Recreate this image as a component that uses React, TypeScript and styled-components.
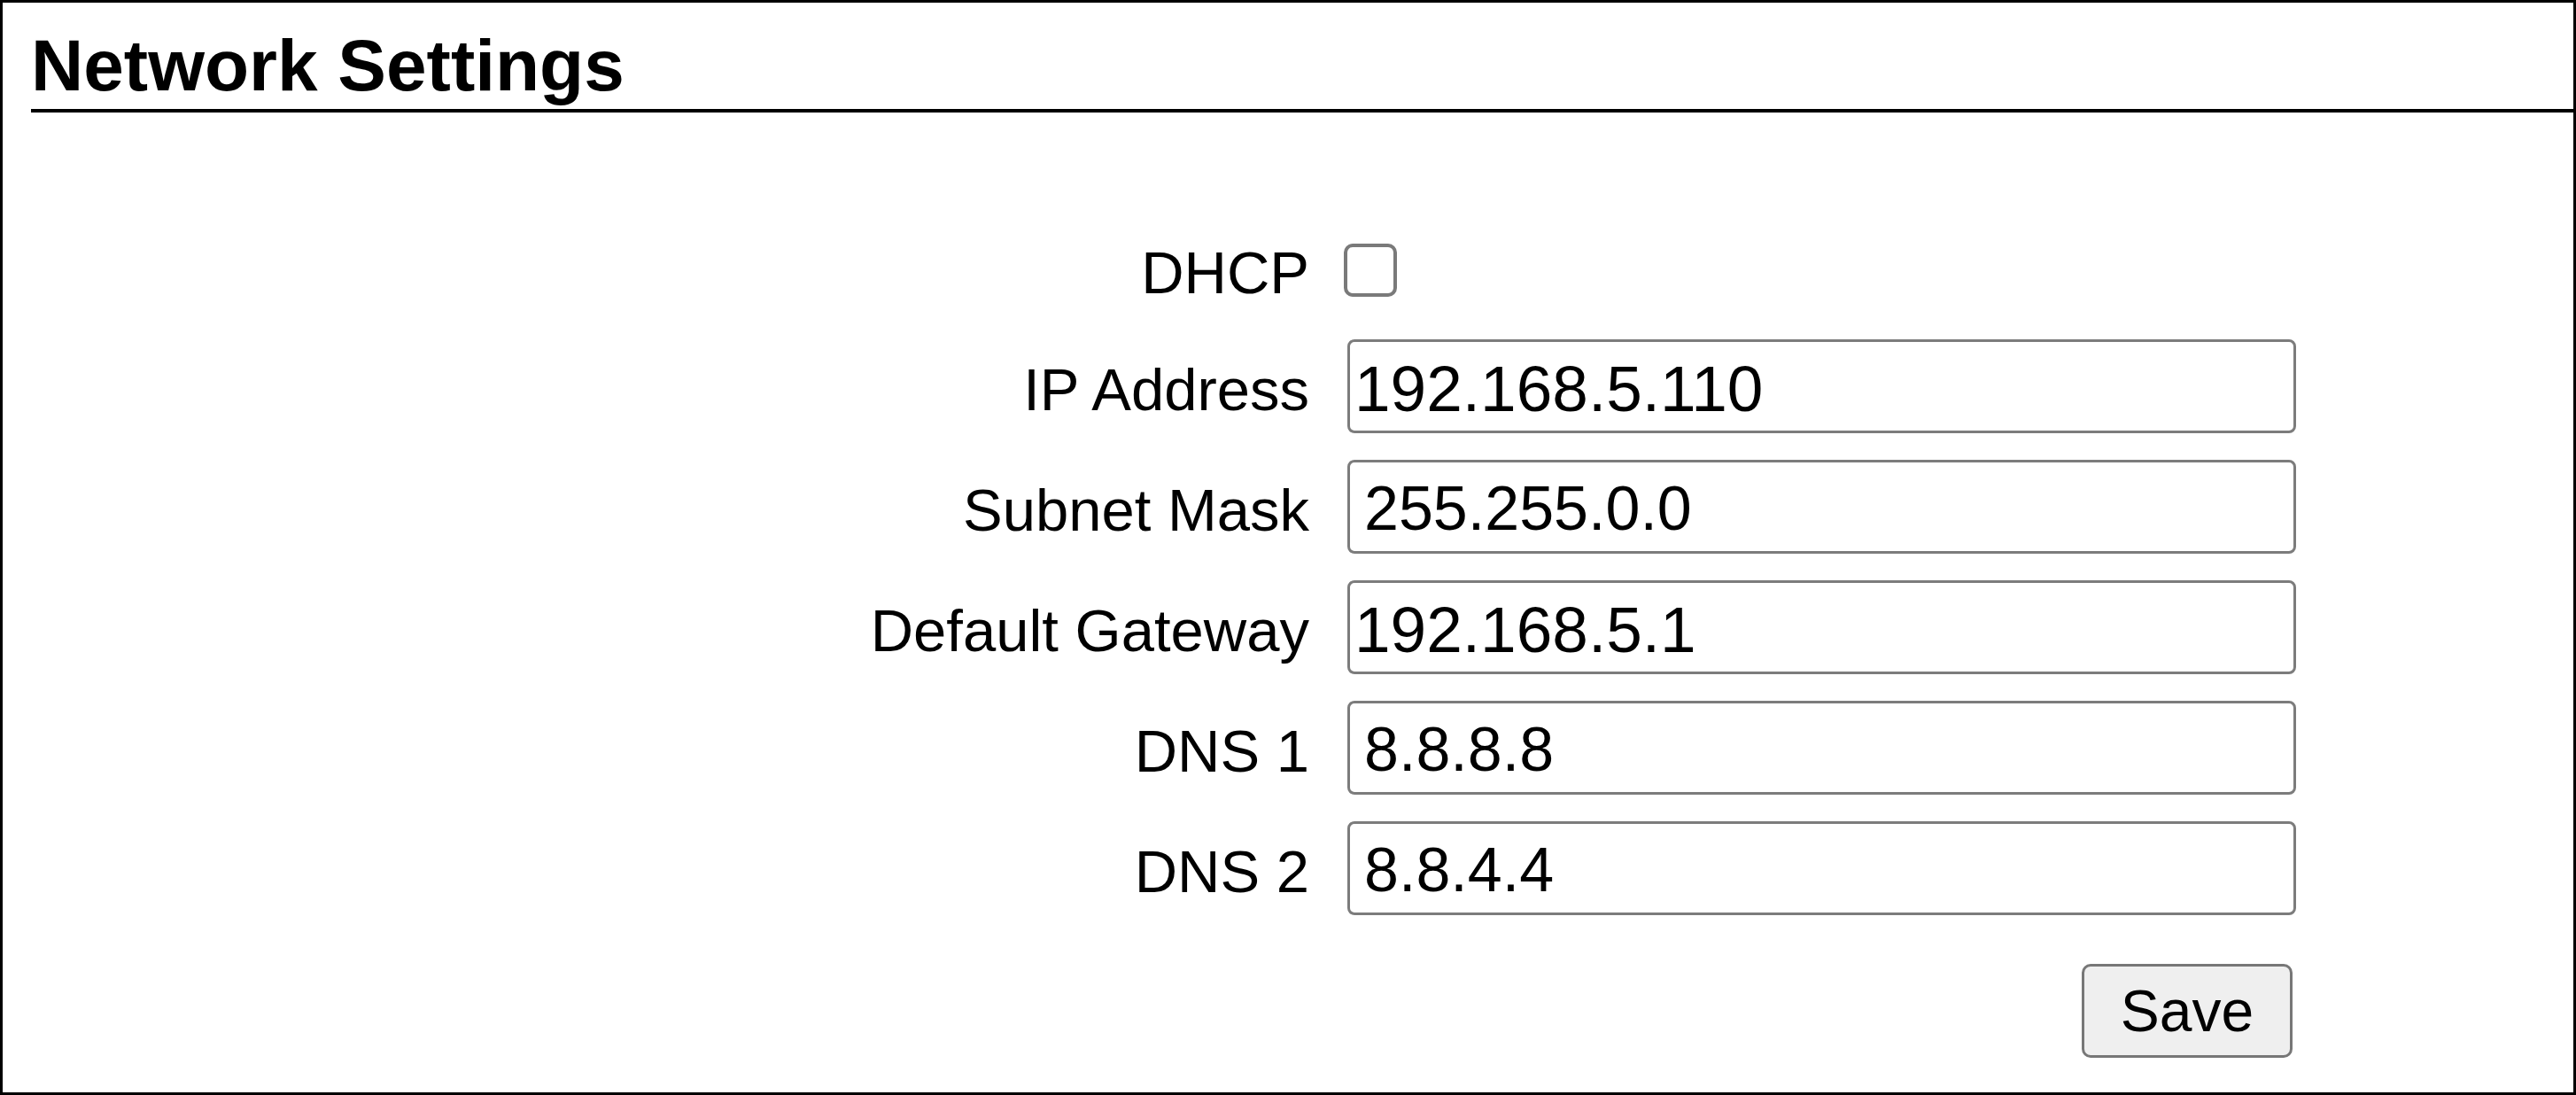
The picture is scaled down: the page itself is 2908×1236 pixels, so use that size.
import React from "react";
import styled, { createGlobalStyle } from "styled-components";

const GlobalStyle = createGlobalStyle`
  html, body { margin: 0; padding: 0; background: #fff; }
  body { font-family: "Liberation Sans", Arial, sans-serif; color: #000; }
  *, *::before, *::after { box-sizing: border-box; }
`;

const Frame = styled.div`
  height: 100vh;
  border: 3px solid #000;
  display: flex;
  flex-direction: column;
  background: #fff;
`;

const Title = styled.h2`
  margin: 26px 0 0 32px;
  padding: 0 0 4px 0;
  font-family: "Liberation Sans", Arial, sans-serif;
  font-size: 82px;
  font-weight: 700;
  line-height: 90px;
  color: #000;
  border-bottom: 4px solid #000;
`;

const Form = styled.form`
  display: flex;
  flex-direction: column;
  gap: 30px;
  margin-top: 141px;
  padding-right: 313px;
`;

const Row = styled.div<{ $extra?: number }>`
  display: grid;
  grid-template-columns: 1fr 1071px;
  column-gap: 43px;
  align-items: center;
  margin-top: ${(p) => p.$extra ?? 0}px;
`;

const Label = styled.label`
  justify-self: end;
  font-size: 67px;
  line-height: 1;
  padding-top: 6px;
  color: #000;
  white-space: nowrap;
`;

const Checkbox = styled.input`
  appearance: none;
  -webkit-appearance: none;
  margin: 0 0 0 -4px;
  width: 60px;
  height: 60px;
  border: 4px solid #7a7a7a;
  border-radius: 10px;
  background: #fff;
`;

const TextInput = styled.input<{ $size: number; $pad: number }>`
  width: 100%;
  height: 106px;
  margin: 0;
  border: 3px solid #7c7c7c;
  border-radius: 8px;
  padding: 4px 0 0 ${(p) => p.$pad}px;
  font-family: "Liberation Sans", Arial, sans-serif;
  font-size: ${(p) => p.$size}px;
  color: #000;
  background: #fff;
  outline: none;
`;

const SaveButton = styled.button`
  grid-column: 2;
  justify-self: end;
  margin: 0 4px 0 0;
  width: 238px;
  height: 106px;
  border: 3px solid #777;
  border-radius: 10px;
  background: #efefef;
  font-family: "Liberation Sans", Arial, sans-serif;
  font-size: 66px;
  color: #000;
  padding: 0;
`;

type Field = { label: string; value: string; large: boolean };

const fields: Field[] = [
  { label: "IP Address", value: "192.168.5.110", large: true },
  { label: "Subnet Mask", value: "255.255.0.0", large: false },
  { label: "Default Gateway", value: "192.168.5.1", large: true },
  { label: "DNS 1", value: "8.8.8.8", large: false },
  { label: "DNS 2", value: "8.8.4.4", large: false },
];

export default function App() {
  return (
    <>
      <GlobalStyle />
      <Frame>
        <Title>Network Settings</Title>
        <Form onSubmit={(e) => e.preventDefault()}>
          <Row>
            <Label htmlFor="dhcp">DHCP</Label>
            <Checkbox id="dhcp" type="checkbox" />
          </Row>
          {fields.map((f, i) => (
            <Row key={f.label} $extra={i === 0 ? 12 : 0}>
              <Label htmlFor={`f${i}`}>{f.label}</Label>
              <TextInput
                id={`f${i}`}
                type="text"
                defaultValue={f.value}
                $size={f.large ? 73 : 70}
                $pad={f.large ? 5 : 16}
              />
            </Row>
          ))}
          <Row $extra={25}>
            <SaveButton type="submit">Save</SaveButton>
          </Row>
        </Form>
      </Frame>
    </>
  );
}
